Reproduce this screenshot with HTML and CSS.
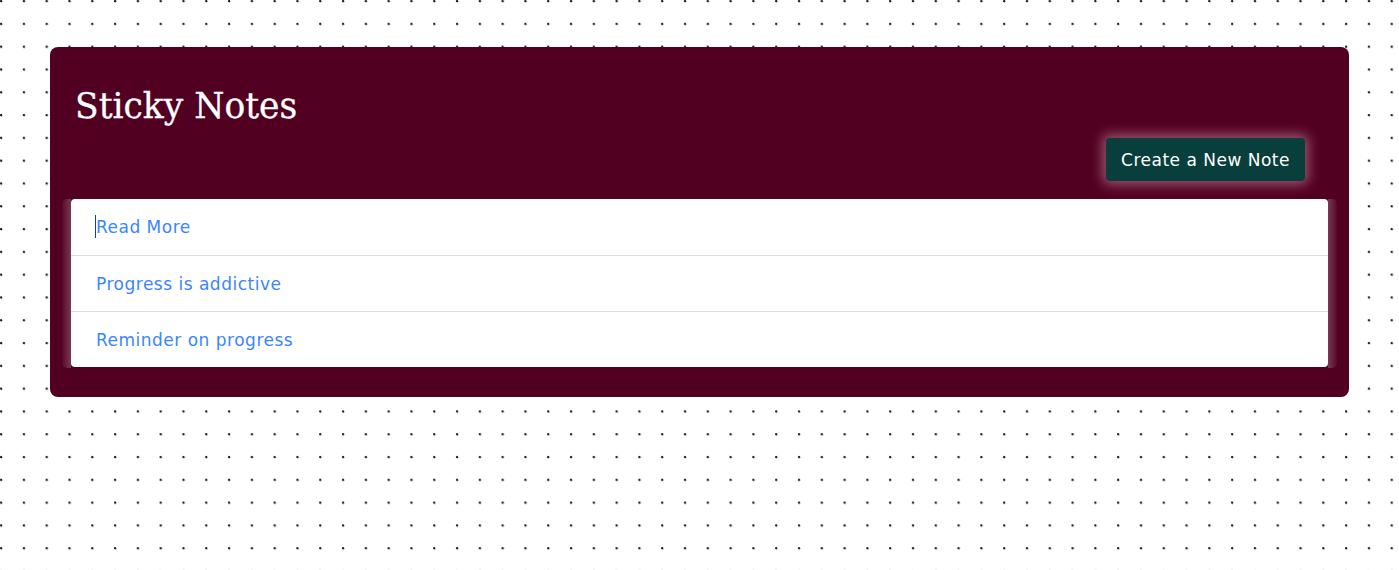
FILE: index.html
```html
<!DOCTYPE html>
<html lang="en">
<head>
<meta charset="utf-8">
<title>Sticky Notes</title>
<link rel="stylesheet" href="styles.css">
</head>
<body>
<main class="page">
  <section class="board">
    <header class="board-head">
      <h1 class="title">Sticky Notes</h1>
      <div class="actions">
        <button class="btn-new" type="button">Create a New Note</button>
      </div>
    </header>
    <div class="list-wrap">
      <ul class="notes">
        <li class="note"><a href="#" class="note-link"><span class="caret"></span>Read More</a></li>
        <li class="note"><a href="#" class="note-link">Progress is addictive</a></li>
        <li class="note"><a href="#" class="note-link">Reminder on progress</a></li>
      </ul>
    </div>
  </section>
</main>
</body>
</html>
```
FILE: styles.css
```css
html, body {
  margin: 0;
  padding: 0;
}
body {
  min-height: 570px;
  background-color: #ffffff;
  background-image: radial-gradient(circle at 1.2px 1.2px, #2a1238 0.9px, rgba(42,18,56,0) 1.5px);
  background-size: 22.8px 22.8px;
  font-family: "DejaVu Sans", "Open Sans", sans-serif;
}
.page {
  padding: 47px 50px 0 50px;
}
.board {
  background: #520021;
  border-radius: 8px;
  padding: 0 12px 29px 12px;
}
.board-head {
  height: 152px;
  display: flex;
  flex-direction: column;
}
.title {
  margin: 0;
  padding: 36px 0 0 13px;
  font-family: "DejaVu Serif", "Liberation Serif", serif;
  font-weight: 400;
  font-size: 34.5px;
  line-height: 46px;
  color: #ffffff;
  letter-spacing: 0;
  -webkit-text-stroke: 0.3px #ffffff;
}
.actions {
  display: flex;
  justify-content: flex-end;
  padding: 9px 32px 0 0;
}
.btn-new {
  background: #083e3b;
  color: #ffffff;
  border: 0;
  border-radius: 4px;
  width: 199px;
  height: 43px;
  padding: 0;
  font-family: "DejaVu Sans", "Open Sans", sans-serif;
  font-size: 17px;
  letter-spacing: 0.5px;
  box-shadow: 0 0 12px 4px rgba(255, 200, 220, 0.4);
  cursor: pointer;
}
.list-wrap {
  padding: 0 9px 1px 9px;
  border-radius: 5px;
  background: linear-gradient(to right,
    rgba(255,255,255,0.04) 0,
    rgba(255,255,255,0.22) 9px,
    rgba(255,255,255,0) 9px,
    rgba(255,255,255,0) calc(100% - 9px),
    rgba(255,255,255,0.22) calc(100% - 9px),
    rgba(255,255,255,0.04) 100%);
}
.notes {
  list-style: none;
  margin: 0;
  padding: 0;
  background: #ffffff;
  border-radius: 4px;
}
.note {
  height: 55px;
  display: flex;
  align-items: center;
  padding: 0 25px;
  border-top: 1px solid #dedede;
}
.note:first-child {
  border-top: 0;
  height: 56px;
}
.note-link {
  color: #3a86ff;
  text-decoration: none;
  font-size: 17px;
  letter-spacing: 0.5px;
  position: relative;
}
.caret {
  position: absolute;
  left: -1px;
  top: -2px;
  width: 1px;
  height: 23px;
  background: #1f3f7a;
}
```
